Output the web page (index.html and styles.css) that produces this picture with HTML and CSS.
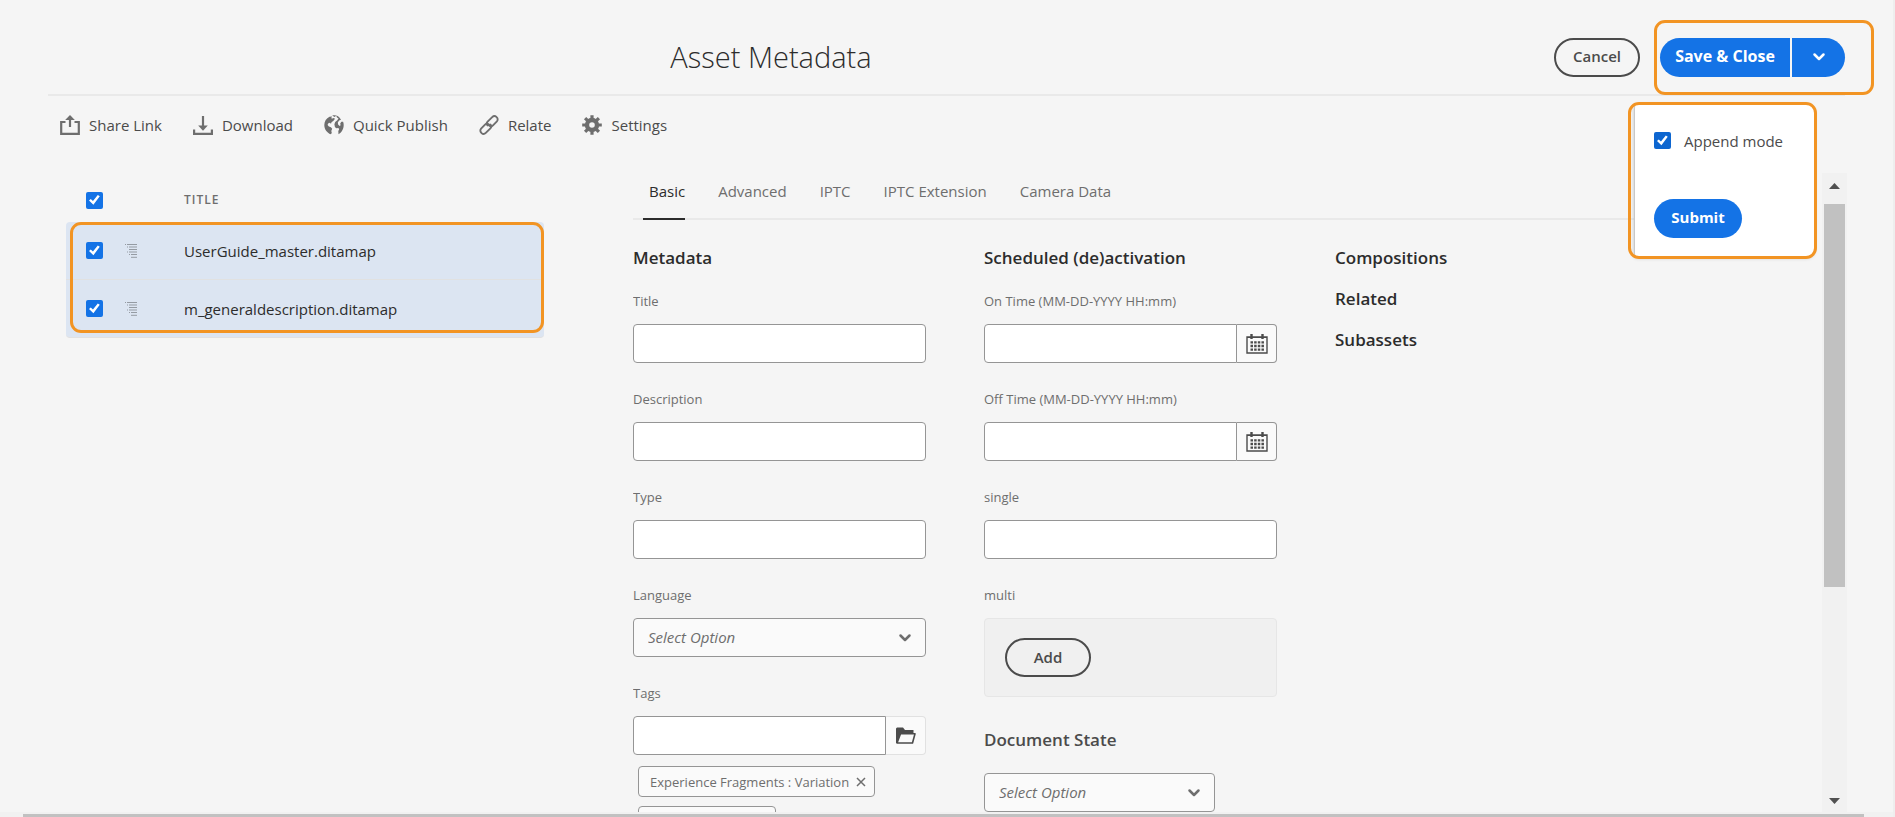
FILE: index.html
```html
<!DOCTYPE html>
<html lang="en">
<head>
<meta charset="utf-8">
<title>Asset Metadata</title>
<link rel="stylesheet" href="styles.css">
</head>
<body>
<svg class="defs" aria-hidden="true">
  <symbol id="chevron" viewBox="0 0 14 10"><path d="M2.500 2.500l4.500 4.500 4.500-4.500" fill="none" stroke="currentColor" stroke-width="2.500" stroke-linecap="round" stroke-linejoin="round"/></symbol>
  <symbol id="calendar" viewBox="0 0 22 20">
    <path d="M1 3h20v16H1zM1 3.400h20" fill="none" stroke="currentColor" stroke-width="1.400"/>
    <path d="M5.500 0v5M16.500 0v5" stroke="currentColor" stroke-width="2.400"/>
    <path d="M4.500 8.300h13.500M4.500 12h13.500M4.500 15.700h13.500" stroke="currentColor" stroke-width="2.300" stroke-dasharray="2.500 1.150"/>
  </symbol>
  <symbol id="map" viewBox="0 0 12 14">
    <path d="M0 .5h1M2 .5h10M2 3h1M4 3h8M4 5.500h8M2 8h1M4 8h8M4 10.500h1M6 10.500h6M6 13.300h6" stroke="currentColor" stroke-width="1"/>
  </symbol>
</svg>

<header class="header">
  <h1 class="page-title">Asset Metadata</h1>
  <div class="header-actions">
    <button type="button" class="btn btn-outline">Cancel</button>
    <div class="split">
      <button type="button" class="btn btn-primary split-main">Save &amp; Close</button>
      <button type="button" class="btn btn-primary split-more" aria-label="More save options"><svg class="chevron"><use href="#chevron"/></svg></button>
      <span class="highlight highlight-save"></span>
      <div class="popover">
        <label class="append"><input type="checkbox" class="check check-dark" checked>Append mode</label>
        <button type="button" class="btn btn-primary submit">Submit</button>
        <span class="highlight highlight-popover"></span>
      </div>
    </div>
  </div>
</header>

<nav class="toolbar" aria-label="Asset actions">
  <button type="button" class="tool">
    <svg viewBox="0 0 20 20"><path d="M5.500 7H1.200v11.800h17.600V7h-4.300" fill="none" stroke="currentColor" stroke-width="2.200"/><path d="M10 12V4" stroke="currentColor" stroke-width="2.200"/><path d="M5.200 5L10 0l4.800 5z" fill="currentColor"/></svg>Share Link</button>
  <button type="button" class="tool">
    <svg viewBox="0 0 20 20"><path d="M1.100 14.500v4.300h17.800v-4.300" fill="none" stroke="currentColor" stroke-width="2.200"/><path d="M10 1v11" stroke="currentColor" stroke-width="2.200"/><path d="M5.200 10.500h9.600L10 15.800z" fill="currentColor"/></svg>Download</button>
  <button type="button" class="tool">
    <svg viewBox="0 0 20 20"><path fill="currentColor" d="M5.500 1.700C2.300 3.200.3 6.300.3 10c0 4.300 2.700 7.900 6.500 9.300l1-1.300-.5-2 .9-2.200-1.300-1.600-2-.7L3.600 10l.5-1.600 1.600-.6 1.300 1 .5-1.600 2-1.400 1.500-2-1.400-.8-1 .6-1.500-.4 1-1.700z"/><path fill="currentColor" d="M8.200.5L10.500 2l1.700-1.200.8 1.800 1.500.9-1.200 1.800-2.100 1.600-.8 2.400.5 2.600 1.400 1.300 2.200-.2.600 1.400-.8 1.700.2 3.100c3-1.600 5.200-5.200 5.200-9.200 0-1.200-.2-2.300-.6-3.300l-1.700.1-1.200 1.600.4 1.800-1 .9-1.500-1.700-.3-1.900 1.300-1.900 1.900-.8C15 .6 11.500-.3 8.200.5z"/></svg>Quick Publish</button>
  <button type="button" class="tool">
    <svg viewBox="0 0 20 20" fill="none" stroke="currentColor" stroke-width="1.900" stroke-linecap="round"><path d="M8.500 10.400c-1.100-1.200-1-2.600.1-3.700l4.600-4.600c1.200-1.200 3-1.300 4.200-.2 1.500 1.300 1.700 3.200.5 4.500L14 10.300c-1.200 1.200-2.700 1.200-3.900.2"/><path d="M11.500 9.600c1.100 1.200 1 2.600-.1 3.700l-4.600 4.600c-1.200 1.200-3 1.300-4.200.2-1.500-1.300-1.700-3.200-.5-4.500L6 9.700c1.200-1.200 2.700-1.200 3.900-.2"/></svg>Relate</button>
  <button type="button" class="tool">
    <svg viewBox="0 0 20 20"><circle cx="10" cy="10" r="5" fill="none" stroke="currentColor" stroke-width="4.400"/><path d="M10 .2v4M10 15.800v4M.2 10h4M15.800 10h4M3.100 3.100l2.800 2.800M14.100 14.100l2.800 2.800M3.100 16.900l2.800-2.800M14.100 5.900l2.800-2.800" stroke="currentColor" stroke-width="3.200"/></svg>Settings</button>
</nav>

<main class="main">
  <section class="assets" aria-label="Selected assets">
    <table class="asset-table">
      <thead>
        <tr><th class="c-check"><input type="checkbox" class="check" checked aria-label="Select all"></th><th class="c-icon"></th><th class="c-title">TITLE</th></tr>
      </thead>
      <tbody>
        <tr><td class="c-check"><input type="checkbox" class="check" checked aria-label="Select UserGuide_master.ditamap"></td><td class="c-icon"><svg><use href="#map"/></svg></td><td>UserGuide_master.ditamap</td></tr>
        <tr><td class="c-check"><input type="checkbox" class="check" checked aria-label="Select m_generaldescription.ditamap"></td><td class="c-icon"><svg><use href="#map"/></svg></td><td>m_generaldescription.ditamap</td></tr>
      </tbody>
    </table>
    <span class="highlight highlight-rows"></span>
  </section>

  <section class="properties" aria-label="Properties">
    <div class="tabs" role="tablist">
      <button type="button" class="tab active" role="tab" aria-selected="true">Basic</button>
      <button type="button" class="tab" role="tab">Advanced</button>
      <button type="button" class="tab" role="tab">IPTC</button>
      <button type="button" class="tab" role="tab">IPTC Extension</button>
      <button type="button" class="tab" role="tab">Camera Data</button>
    </div>
    <form class="columns">
      <div class="column">
        <h2>Metadata</h2>
        <div class="field"><label for="title">Title</label><input type="text" id="title" class="box"></div>
        <div class="field"><label for="description">Description</label><input type="text" id="description" class="box"></div>
        <div class="field"><label for="type">Type</label><input type="text" id="type" class="box"></div>
        <div class="field"><label for="language">Language</label>
          <div class="select"><select id="language" class="box"><option>Select Option</option></select><svg class="chevron"><use href="#chevron"/></svg></div></div>
        <div class="field"><label for="tags">Tags</label>
          <div class="group"><input type="text" id="tags" class="box"><button type="button" class="addon addon-light" aria-label="Browse tags"><svg class="folder" viewBox="0 0 20 17"><path d="M0 16V1.500L1 .5h6l2 2.500h8.500v4H4.500L1 16z" fill="currentColor"/><path d="M1 16L4.500 6.700H19L16.500 16z" fill="#fafafa" stroke="currentColor" stroke-width="1.600" stroke-linejoin="round"/></svg></button></div>
          <ul class="tags">
            <li class="tag">Experience Fragments : Variation<button type="button" aria-label="Remove tag"><svg viewBox="0 0 10 10"><path d="M1 1l8 8M9 1L1 9" stroke="currentColor" stroke-width="1.500"/></svg></button></li>
            <li class="tag tag-short"></li>
          </ul></div>
      </div>
      <div class="column">
        <h2>Scheduled (de)activation</h2>
        <div class="field"><label for="on">On Time (MM-DD-YYYY HH:mm)</label>
          <div class="group"><input type="text" id="on" class="box"><button type="button" class="addon" aria-label="Pick on time"><svg class="calendar"><use href="#calendar"/></svg></button></div></div>
        <div class="field"><label for="off">Off Time (MM-DD-YYYY HH:mm)</label>
          <div class="group"><input type="text" id="off" class="box"><button type="button" class="addon" aria-label="Pick off time"><svg class="calendar"><use href="#calendar"/></svg></button></div></div>
        <div class="field"><label for="single">single</label><input type="text" id="single" class="box"></div>
        <div class="multi-label">multi</div>
        <div class="multi"><button type="button" class="btn btn-outline">Add</button></div>
        <h2 class="state-title" id="state-title">Document State</h2>
        <div class="select state"><select class="box" aria-labelledby="state-title"><option>Select Option</option></select><svg class="chevron"><use href="#chevron"/></svg></div>
      </div>
      <div class="column headings">
        <h2>Compositions</h2>
        <h2>Related</h2>
        <h2>Subassets</h2>
      </div>
    </form>
  </section>
  <div class="vscroll" aria-hidden="true"><i class="arrow up"></i><i class="thumb"></i><i class="arrow down"></i></div>
</main>
<div class="hscroll" aria-hidden="true"><i></i></div>
</body>
</html>
```

FILE: styles.css
```css
* { box-sizing: border-box; }

body {
  margin: 0;
  height: 100vh;
  display: flex;
  flex-direction: column;
  overflow: hidden;
  background: #f5f5f5;
  border-right: 2px solid #eeeeee;
  color: #2c2c2c;
  font: 15px/20px "Open Sans", "Noto Sans", sans-serif;
}

button, input, select { font: inherit; color: inherit; margin: 0; }
button { padding: 0; border: 0; background: none; cursor: pointer; }
h1, h2, ul { margin: 0; padding: 0; }
svg { flex: none; }
.defs { position: absolute; width: 0; height: 0; }

.header {
  flex: none;
  display: flex;
  align-items: center;
  gap: 60px;
  margin: 0 48px;
  padding: 20px 0 0;
  height: 96px;
  border-bottom: 2px solid #e9e9e9;
}
.page-title { flex: 1; text-align: center; font-size: 29px; line-height: 40px; font-weight: 300; }
.header-actions { display: flex; gap: 20px; }

.btn { height: 39px; padding: 0 0 2px; border-radius: 20px; font-size: 15px; font-weight: 700; }
.btn-outline { width: 86px; border: 2px solid #4b4b4b; color: #4b4b4b; font-weight: 600; }
.btn-primary { background: #1473e6; color: #fff; }
.split { position: relative; display: flex; gap: 2px; }
.split-main { width: 130px; font-size: 16px; border-radius: 20px 0 0 20px; }
.split-more { width: 53px; border-radius: 0 20px 20px 0; }
.chevron { width: 14px; height: 10px; }

.highlight { position: absolute; border: 3px solid #f29423; border-radius: 11px; pointer-events: none; }
.highlight-save { inset: -18px -29px -18px -6px; }
.highlight-popover { inset: -2px -3px -2px -7px; }
.highlight-rows { inset: 49px 0 5px 4px; }

.popover {
  position: absolute;
  z-index: 2;
  top: 66px;
  right: 31px;
  width: 180px;
  height: 153px;
  padding: 27px 19px 0;
  background: #fff;
  border-left: 1px solid #c8c8c8;
  border-radius: 4px 8px 8px 4px;
  box-shadow: 0 1px 4px #0003;
}
.append { display: flex; align-items: center; gap: 13px; height: 20px; margin-bottom: 48px; white-space: nowrap; color: #4b4b4b; }
.submit { width: 88px; }

.check {
  appearance: none;
  position: relative;
  display: block;
  flex: none;
  width: 17px;
  height: 17px;
  border-radius: 2px;
  background: #1473e6;
}
.check::after {
  content: "";
  position: absolute;
  inset: 3px;
  background: #fff;
  clip-path: polygon(0 55%, 16% 40%, 36% 60%, 80% 4%, 98% 16%, 40% 94%);
}
.check-dark { background: #0d66d0; }

.toolbar { flex: none; display: flex; gap: 31px; padding: 14px 60px 0; height: 77px; align-items: flex-start; }
.tool { display: flex; align-items: center; gap: 9px; height: 30px; color: #4b4b4b; white-space: nowrap; }
.tool svg { width: 20px; height: 20px; color: #6e6e6e; overflow: visible; }

.main { flex: 1; min-height: 0; display: flex; padding: 0 46px 0 66px; }

.assets { position: relative; flex: none; align-self: flex-start; width: 478px; margin-right: 89px; }
.asset-table { width: 100%; border-spacing: 0; table-layout: fixed; }
.asset-table th, .asset-table td { padding: 0; text-align: left; }
.asset-table th { height: 49px; padding-top: 5px; }
.asset-table th.c-title { font-size: 12px; font-weight: 600; letter-spacing: 1px; color: #6e6e6e; }
.asset-table .c-check { width: 59px; padding-left: 20px; }
.asset-table .c-icon { width: 59px; color: #959ba3; }
.c-icon svg { display: block; width: 12px; height: 14px; }
.asset-table td { height: 58px; background: #dce5f2; border-bottom: 1px solid #e1e1e1; }
.asset-table tbody tr:first-child td:first-child { border-top-left-radius: 4px; }
.asset-table tbody tr:first-child td:last-child { border-top-right-radius: 4px; }
.asset-table tbody tr:last-child td:first-child { border-bottom-left-radius: 4px; }
.asset-table tbody tr:last-child td:last-child { border-bottom-right-radius: 4px; }

.properties { flex: 1; min-width: 0; overflow: hidden; padding-right: 17px; }
.tabs { display: flex; gap: 33px; height: 47px; padding: 0 16px; border-bottom: 2px solid #e9e9e9; }
.tab { position: relative; height: 36px; color: #6e6e6e; white-space: nowrap; }
.tab.active { color: #2c2c2c; }
.tab.active::after { content: ""; position: absolute; left: -6px; right: 0; bottom: -11px; height: 2px; background: #2c2c2c; }

.columns { display: grid; grid-template-columns: repeat(3, 25%); column-gap: 58px; padding-top: 26px; }
.column { min-width: 0; }
h2 { font-size: 17px; line-height: 24px; font-weight: 600; white-space: nowrap; }
.column > h2:first-child { margin-bottom: 21px; }
.headings { display: grid; align-content: start; row-gap: 17px; }
.headings > h2:first-child { margin-bottom: 0; }
.field { margin-bottom: 26px; }
.field label, .multi-label { display: block; height: 20px; margin-bottom: 13px; font-size: 13px; color: #6e6e6e; white-space: nowrap; }
.box { display: block; width: 100%; height: 39px; padding: 0 14px; border: 1px solid #959595; border-radius: 4px; background: #fff; }
.select { position: relative; }
.select .box { appearance: none; padding-bottom: 2px; background: #fafafa; font-style: italic; color: #6e6e6e; }
.select .chevron { position: absolute; right: 14px; top: 15px; color: #6e6e6e; pointer-events: none; }
.group { display: flex; }
.group .box { flex: 1; min-width: 0; border-radius: 4px 0 0 4px; }
.addon { width: 40px; display: grid; place-items: center; border: 1px solid #959595; border-left: 0; border-radius: 0 4px 4px 0; background: #fafafa; color: #4b4b4b; }
.addon-light { border-color: #e1e1e1; }
.calendar { width: 22px; height: 20px; }
.folder { width: 20px; height: 17px; }

.tags { list-style: none; padding: 11px 5px 0; display: grid; justify-items: start; gap: 9px; }
.tag { display: flex; align-items: center; justify-content: space-between; gap: 7px; min-width: 138px; height: 31px; padding: 0 8px 0 11px; border: 1px solid #959595; border-radius: 4px; background: #fafafa; color: #6e6e6e; font-size: 13px; white-space: nowrap; }
.tag svg { display: block; width: 10px; height: 10px; }

.multi { height: 79px; padding: 19px 20px; border: 1px solid #e6e6e6; border-radius: 4px; background: #f0f0f0; }
.state-title { margin: 31px 0 21px; color: #4b4b4b; }
.state { width: 79%; }

.vscroll { flex: none; width: 25px; display: flex; flex-direction: column; align-items: center; background: #f1f1f1; }
.arrow { width: 11px; height: 6px; background: #505050; }
.up { margin: 10px 0 15px; clip-path: polygon(50% 0, 100% 100%, 0 100%); }
.down { margin: auto 0 8px; clip-path: polygon(0 0, 100% 0, 50% 100%); }
.thumb { width: 21px; height: 60%; background: #c1c1c1; }
.hscroll { flex: none; height: 5px; padding: 2px 29px 0 23px; background: #f1f1f1; }
.hscroll i { display: block; height: 3px; background: #c1c1c1; }
```
